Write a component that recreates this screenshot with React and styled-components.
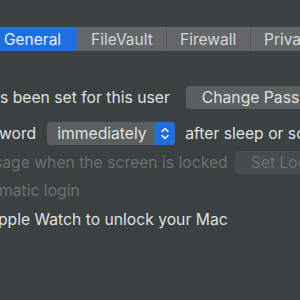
import React from 'react';
import styled, {createGlobalStyle} from 'styled-components';

const Global = createGlobalStyle`
  html, body {
    margin: 0;
    padding: 0;
    background: #3b4040;
  }
  body {
    font-family: Inter, "Noto Sans", "Liberation Sans", sans-serif;
    -webkit-font-smoothing: antialiased;
  }
`;

const Page = styled.div`
  width: 300px;
  height: 300px;
  overflow: hidden;
  background: #3b4040;
  color: #dfe1e1;
  font-size: 15.7px;
`;

const TabBar = styled.div`
  display: flex;
  margin-top: 27px;
  height: 24px;
  width: 340px;
  background: #626666;
`;

const Tab = styled.div`
  display: flex;
  align-items: center;
  flex-shrink: 0;
  width: ${props => props.w}px;
  padding-left: ${props => props.pad}px;
  box-sizing: border-box;
  background: ${props => props.active ? '#1e6fe0' : '#636767'};
  border-right: 1px solid ${props => props.active ? '#1e6fe0' : '#545858'};
  color: ${props => props.active ? '#e8f0ff' : '#d4d6d6'};
  font-size: 15.5px;
  white-space: nowrap;
`;

const Rows = styled.div`
  display: flex;
  flex-direction: column;
`;

const Row = styled.div`
  display: flex;
  align-items: center;
  height: 24px;
  margin-top: ${props => props.top}px;
  margin-left: ${props => props.shift || 0}px;
  white-space: nowrap;
  color: ${props => props.disabled ? '#6c7070' : '#dfe1e1'};
`;

const Button = styled.div`
  display: flex;
  align-items: center;
  flex-shrink: 0;
  height: 23px;
  margin-left: ${props => props.gap}px;
  padding: 0 16px;
  border-radius: 4px;
  background: ${props => props.disabled ? '#474b4b' : '#5b5f5f'};
  color: ${props => props.disabled ? '#6c7070' : '#dfe1e1'};
`;

const Popup = styled.div`
  display: flex;
  align-items: center;
  flex-shrink: 0;
  height: 23px;
  width: 128px;
  margin-left: 11px;
  margin-right: 10px;
  border-radius: 4px;
  background: #5b5f5f;
  overflow: hidden;
`;

const PopupLabel = styled.span`
  flex: 1;
  padding-left: 10px;
`;

const Stepper = styled.div`
  display: flex;
  align-items: center;
  justify-content: center;
  width: 20px;
  height: 100%;
  background: #1e6fe0;
`;

const Chevrons = () => (
  <svg width="10" height="15" viewBox="0 0 10 15" fill="none" stroke="#f2f6ff" strokeWidth="1.6" strokeLinecap="round" strokeLinejoin="round">
    <path d="M2 5.5 L5 2.5 L8 5.5" />
    <path d="M2 9.5 L5 12.5 L8 9.5" />
  </svg>
);

export default function App() {
  return (
    <Page>
      <Global />
      <TabBar>
        <Tab active w={77} pad={4}>General</Tab>
        <Tab w={90} pad={14}>FileVault</Tab>
        <Tab w={84} pad={13}>Firewall</Tab>
        <Tab w={89} pad={13}>Privacy</Tab>
      </TabBar>
      <Rows>
        <Row top={34}>
          s been set for this user
          <Button gap={16}>Change Password…</Button>
        </Row>
        <Row top={12} shift={-1}>
          word
          <Popup>
            <PopupLabel>immediately</PopupLabel>
            <Stepper><Chevrons /></Stepper>
          </Popup>
          after sleep or screen saver begins
        </Row>
        <Row top={5} shift={-6} disabled>
          sage when the screen is locked
          <Button gap={7} disabled>Set Lock Message…</Button>
        </Row>
        <Row top={4} shift={-1} disabled>
          matic login
        </Row>
        <Row top={5} shift={-2}>
          pple Watch to unlock your Mac
        </Row>
      </Rows>
    </Page>
  );
}
